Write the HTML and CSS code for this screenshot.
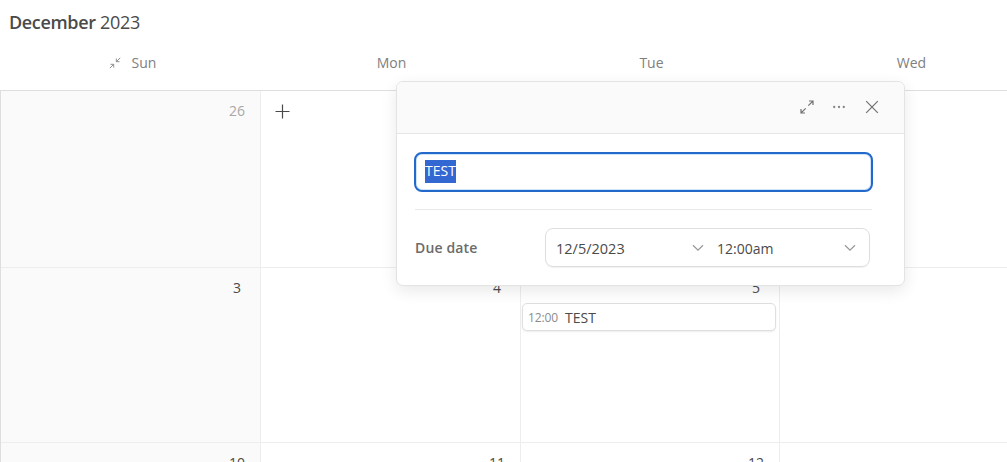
FILE: index.html
```
<!DOCTYPE html>
<html lang="en">
<head>
    <meta charset="UTF-8">
    <meta name="viewport" content="width=device-width, initial-scale=1.0">
    <title>December 2023</title>
    <link rel="stylesheet" href="styles.css">
</head>
<body>

    <div class="calendar">
        <h1 class="title"><strong>December</strong> <span>2023</span></h1>

        <!-- Weekday names -->
        <div class="weekdays">
            <div class="weekday first">
                <svg width="12" height="12" viewBox="0 0 12 12" fill="none" stroke="#8f8f8f" stroke-width="1">
                    <path d="M11.2.8L7.3 4.7M7.3 1.5v3.2h3.2M.8 11.2l3.9-3.9M1.5 7.3h3.2v3.2"/>
                </svg>
                <span>Sun</span>
            </div>
            <div class="weekday"><span>Mon</span></div>
            <div class="weekday"><span>Tue</span></div>
            <div class="weekday"><span>Wed</span></div>
        </div>

        <!-- Days -->
        <div class="days">
            <div class="day weekend"><span class="number muted">26</span></div>
            <div class="day">
                <svg class="add" width="15" height="15" viewBox="0 0 15 15" stroke="#4a4a4a" stroke-width="1.2">
                    <path d="M7.5.5v14M.5 7.5h14"/>
                </svg>
            </div>
            <div class="day"></div>
            <div class="day"></div>

            <div class="day weekend"><span class="number">3</span></div>
            <div class="day"><span class="number">4</span></div>
            <div class="day">
                <span class="number">5</span>
                <div class="event"><span class="event-time">12:00</span><span class="event-name">TEST</span></div>
            </div>
            <div class="day"></div>

            <div class="day weekend"><span class="number">10</span></div>
            <div class="day"><span class="number">11</span></div>
            <div class="day"><span class="number">12</span></div>
            <div class="day"></div>
        </div>
    </div>

    <!-- Task popup -->
    <div class="popup">
        <div class="popup-header">
            <svg width="14" height="14" viewBox="0 0 14 14" fill="none" stroke="#707070" stroke-width="1.2">
                <path d="M8.3 5.7L12.9 1.1M9 1h4v4M5.7 8.3L1.1 12.9M1 9v4h4"/>
            </svg>
            <svg class="more" width="14" height="14" viewBox="0 0 14 14" fill="#858585">
                <circle cx="2.2" cy="7" r="1.15"/>
                <circle cx="7" cy="7" r="1.15"/>
                <circle cx="11.8" cy="7" r="1.15"/>
            </svg>
            <svg class="close" width="14" height="14" viewBox="0 0 14 14" stroke="#707070" stroke-width="1.2">
                <path d="M1.2 1.2l11.6 11.6M12.8 1.2L1.2 12.8"/>
            </svg>
        </div>
        <div class="popup-body">
            <div class="name-input"><span class="selected">TEST</span></div>
            <div class="due-row">
                <span class="due-label">Due date</span>
                <div class="due-box">
                    <div class="due-date">
                        <span>12/5/2023</span>
                        <svg width="12" height="8" viewBox="0 0 12 8" fill="none" stroke="#999" stroke-width="1.3">
                            <path d="M1 1.2l5 5 5-5"/>
                        </svg>
                    </div>
                    <div class="due-time">
                        <span>12:00am</span>
                        <svg width="12" height="8" viewBox="0 0 12 8" fill="none" stroke="#999" stroke-width="1.3">
                            <path d="M1 1.2l5 5 5-5"/>
                        </svg>
                    </div>
                </div>
            </div>
        </div>
    </div>

</body>
</html>
```
FILE: styles.css
```
* {
    box-sizing: border-box;
}

body {
    margin: 0;
    height: 462px;
    overflow: hidden;
    background: #fff;
    font-family: "Segoe UI", "Open Sans", sans-serif;
    font-size: 14px;
    color: #4a4a4a;
}

svg {
    display: block;
    flex: none;
}

.calendar {
    height: 462px;
    overflow: hidden;
}

.title {
    margin: 0;
    height: 46px;
    padding-left: 9px;
    font-size: 18px;
    line-height: 44px;
    font-weight: 400;
    letter-spacing: -0.3px;
}

.title strong {
    font-weight: 600;
    letter-spacing: -0.35px;
}

/* Weekday names */
.weekdays {
    display: grid;
    grid-template-columns: 261px 260px 260px 260px;
    height: 44px;
}

.weekday {
    display: flex;
    justify-content: center;
    padding: 7px 0 0 1px;
    line-height: 20px;
    color: #808080;
}

.weekday.first {
    gap: 11px;
    padding-left: 4px;
}

.weekday svg {
    margin-top: 4px;
}

/* Days */
.days {
    display: grid;
    grid-template-columns: 260px 260px 259px 260px;
    grid-template-rows: 177px 175px 175px;
    width: 1041px;
    border-top: 1px solid #dedede;
    border-left: 1px solid #dedede;
}

.day {
    display: flex;
    flex-direction: column;
    border-right: 1px solid #ededed;
    border-bottom: 1px solid #ededed;
}

.weekend {
    background: #fafafa;
}

.number {
    align-self: flex-end;
    width: 28px;
    margin: 10px 9px 0 0;
    line-height: 20px;
    text-align: center;
}

.muted {
    color: #a8a8a8;
}

.add {
    margin: 13px 0 0 14px;
}

.event {
    display: flex;
    align-items: center;
    height: 28px;
    margin: 5px 3px 0 1px;
    padding-left: 5px;
    border: 1px solid #dfdfdf;
    border-radius: 5px;
    background: #fff;
    box-shadow: 0 1px 2px rgba(0, 0, 0, 0.08);
}

.event-time {
    width: 37px;
    padding-top: 1px;
    font-size: 12px;
    letter-spacing: -0.1px;
    color: #8c8c8c;
}

/* Task popup */
.popup {
    position: absolute;
    top: 81px;
    left: 396px;
    width: 509px;
    height: 205px;
    border: 1px solid #e3e3e3;
    border-radius: 7px;
    background: #fff;
    box-shadow: 0 5px 16px rgba(0, 0, 0, 0.09);
    overflow: hidden;
}

.popup-header {
    display: flex;
    align-items: center;
    justify-content: flex-end;
    height: 52px;
    padding: 0 25px 1px 0;
    border-bottom: 1px solid #e6e6e6;
    background: #fafafa;
}

.more {
    margin-left: 18px;
}

.close {
    margin-left: 19px;
}

.popup-body {
    padding: 18px 31px 0 17px;
}

.name-input {
    display: flex;
    align-items: center;
    height: 40px;
    padding: 0 0 1px 9px;
    border: 2px solid #2269ca;
    border-radius: 8px;
    box-shadow: inset 0 0 0 1px #cfe4fb;
}

.selected {
    height: 23px;
    line-height: 22px;
    background: #3367d1;
    color: #fff;
}

.due-row {
    display: flex;
    margin: 17px 1px 0;
    padding-top: 18px;
    border-top: 1px solid #e9e9e9;
}

.due-label {
    width: 130px;
    line-height: 39px;
    font-weight: 600;
    letter-spacing: 0.15px;
    color: #6b6b6b;
}

.due-box {
    display: flex;
    width: 325px;
    height: 39px;
    border: 1px solid #dedede;
    border-radius: 8px;
    box-shadow: 0 1px 1px rgba(0, 0, 0, 0.06);
    line-height: 39px;
}

.due-date,
.due-time {
    display: flex;
    justify-content: space-between;
}

.due-date {
    width: 148px;
    margin-left: 10px;
    font-size: 14.5px;
}

.due-time {
    width: 139px;
    margin-left: 13px;
}

.due-box svg {
    margin-top: 15px;
}
```
